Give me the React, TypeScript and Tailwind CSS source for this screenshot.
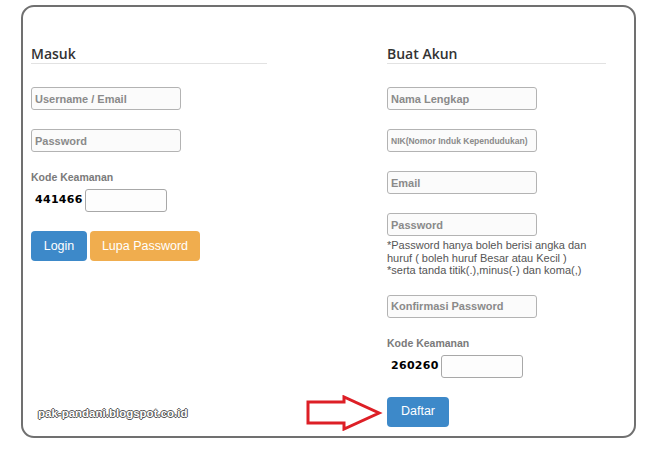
import React from "react";

const Field: React.FC<{ label: string; small?: boolean; className?: string }> = ({ label, small, className }) => (
	<input
		type="text"
		placeholder={label}
		className={`block w-[150px] h-[23px] border border-[#b3b3b3] rounded-[3px] bg-[#fbfbfb] pl-[3px] font-bold text-[#888] placeholder:text-[#8a8a8a] outline-none font-[family-name:Liberation_Sans,Arial,sans-serif] ${
			small ? "text-[8.5px]" : "text-[11px]"
		} ${className ?? ""}`}
	/>
);

const Captcha: React.FC<{ code: string }> = ({ code }) => (
	<div className="flex items-center gap-[2px] pl-[4px] mt-[5px]">
		<span className="text-[11px] font-bold text-black font-[family-name:DejaVu_Sans,sans-serif] tracking-[0.3px]">{code}</span>
		<input type="text" className="w-[82px] h-[23px] border border-[#a8a8a8] rounded-[3px] bg-[#fdfdfd] outline-none" />
	</div>
);

const Heading: React.FC<{ text: string }> = ({ text }) => (
	<div className="h-[19px] leading-[18px] border-b border-[#e2e2e2] text-[14px] font-semibold text-[#333] font-[family-name:Open_Sans,sans-serif]">
		{text}
	</div>
);

const Label: React.FC<{ text: string; className?: string }> = ({ text, className }) => (
	<p className={`text-[10.5px] leading-[14px] font-bold text-[#7a7a7a] ${className ?? ""}`}>{text}</p>
);

const btn = "h-[30px] rounded-[4px] text-white text-[12.5px] font-[family-name:Liberation_Sans,Arial,sans-serif]";

const App: React.FC = () => {
	return (
		<div className="w-[666px] h-[462px] bg-white font-[family-name:Liberation_Sans,Arial,sans-serif] pt-[5px] pl-[21px]">
			<div className="relative w-[615px] h-[433px] border-2 border-[#707070] rounded-[13px] pt-[38px] pl-[8px] flex gap-[120px]">
				{/* masuk */}
				<div className="w-[236px]">
					<Heading text="Masuk" />
					<Field label="Username / Email" className="mt-[23px]" />
					<Field label="Password" className="mt-[19px]" />
					<Label text="Kode Keamanan" className="mt-[18px]" />
					<Captcha code="441466" />
					<div className="flex gap-[3px] mt-[19px]">
						<button className={`${btn} w-[56px] bg-[#3d89c9]`}>Login</button>
						<button className={`${btn} w-[110px] bg-[#f0ad4e]`}>Lupa Password</button>
					</div>
				</div>
				{/* buat akun */}
				<div className="w-[219px]">
					<Heading text="Buat Akun" />
					<Field label="Nama Lengkap" className="mt-[23px]" />
					<Field label="NIK(Nomor Induk Kependudukan)" small className="mt-[19px]" />
					<Field label="Email" className="mt-[19px]" />
					<Field label="Password" className="mt-[19px]" />
					<p className="mt-[3px] text-[11px] leading-[12.5px] text-[#555]">
						*Password hanya boleh berisi angka dan
						<br />
						huruf ( boleh huruf Besar atau Kecil )
						<br />
						*serta tanda titik(.),minus(-) dan koma(,)
					</p>
					<Field label="Konfirmasi Password" className="mt-[18px]" />
					<Label text="Kode Keamanan" className="mt-[18px]" />
					<Captcha code="260260" />
					<button className={`${btn} mt-[19px] w-[62px] bg-[#3d89c9]`}>Daftar</button>
				</div>

				<span className="absolute left-[15px] top-[399px] text-[11.5px] leading-[14px] font-bold text-white [text-shadow:1px_0_#555,-1px_0_#555,0_1px_#555,0_-1px_#555]">
					pak-pandani.blogspot.co.id
				</span>
				<svg className="absolute left-[282px] top-[388px]" width="80" height="36" viewBox="0 0 80 36">
					<path d="M3 7 H39 V2 L74 18 L39 34 V28 H3 Z" fill="none" stroke="#dd1f26" strokeWidth="3" strokeLinejoin="miter" />
				</svg>
			</div>
		</div>
	);
};

export default App;
